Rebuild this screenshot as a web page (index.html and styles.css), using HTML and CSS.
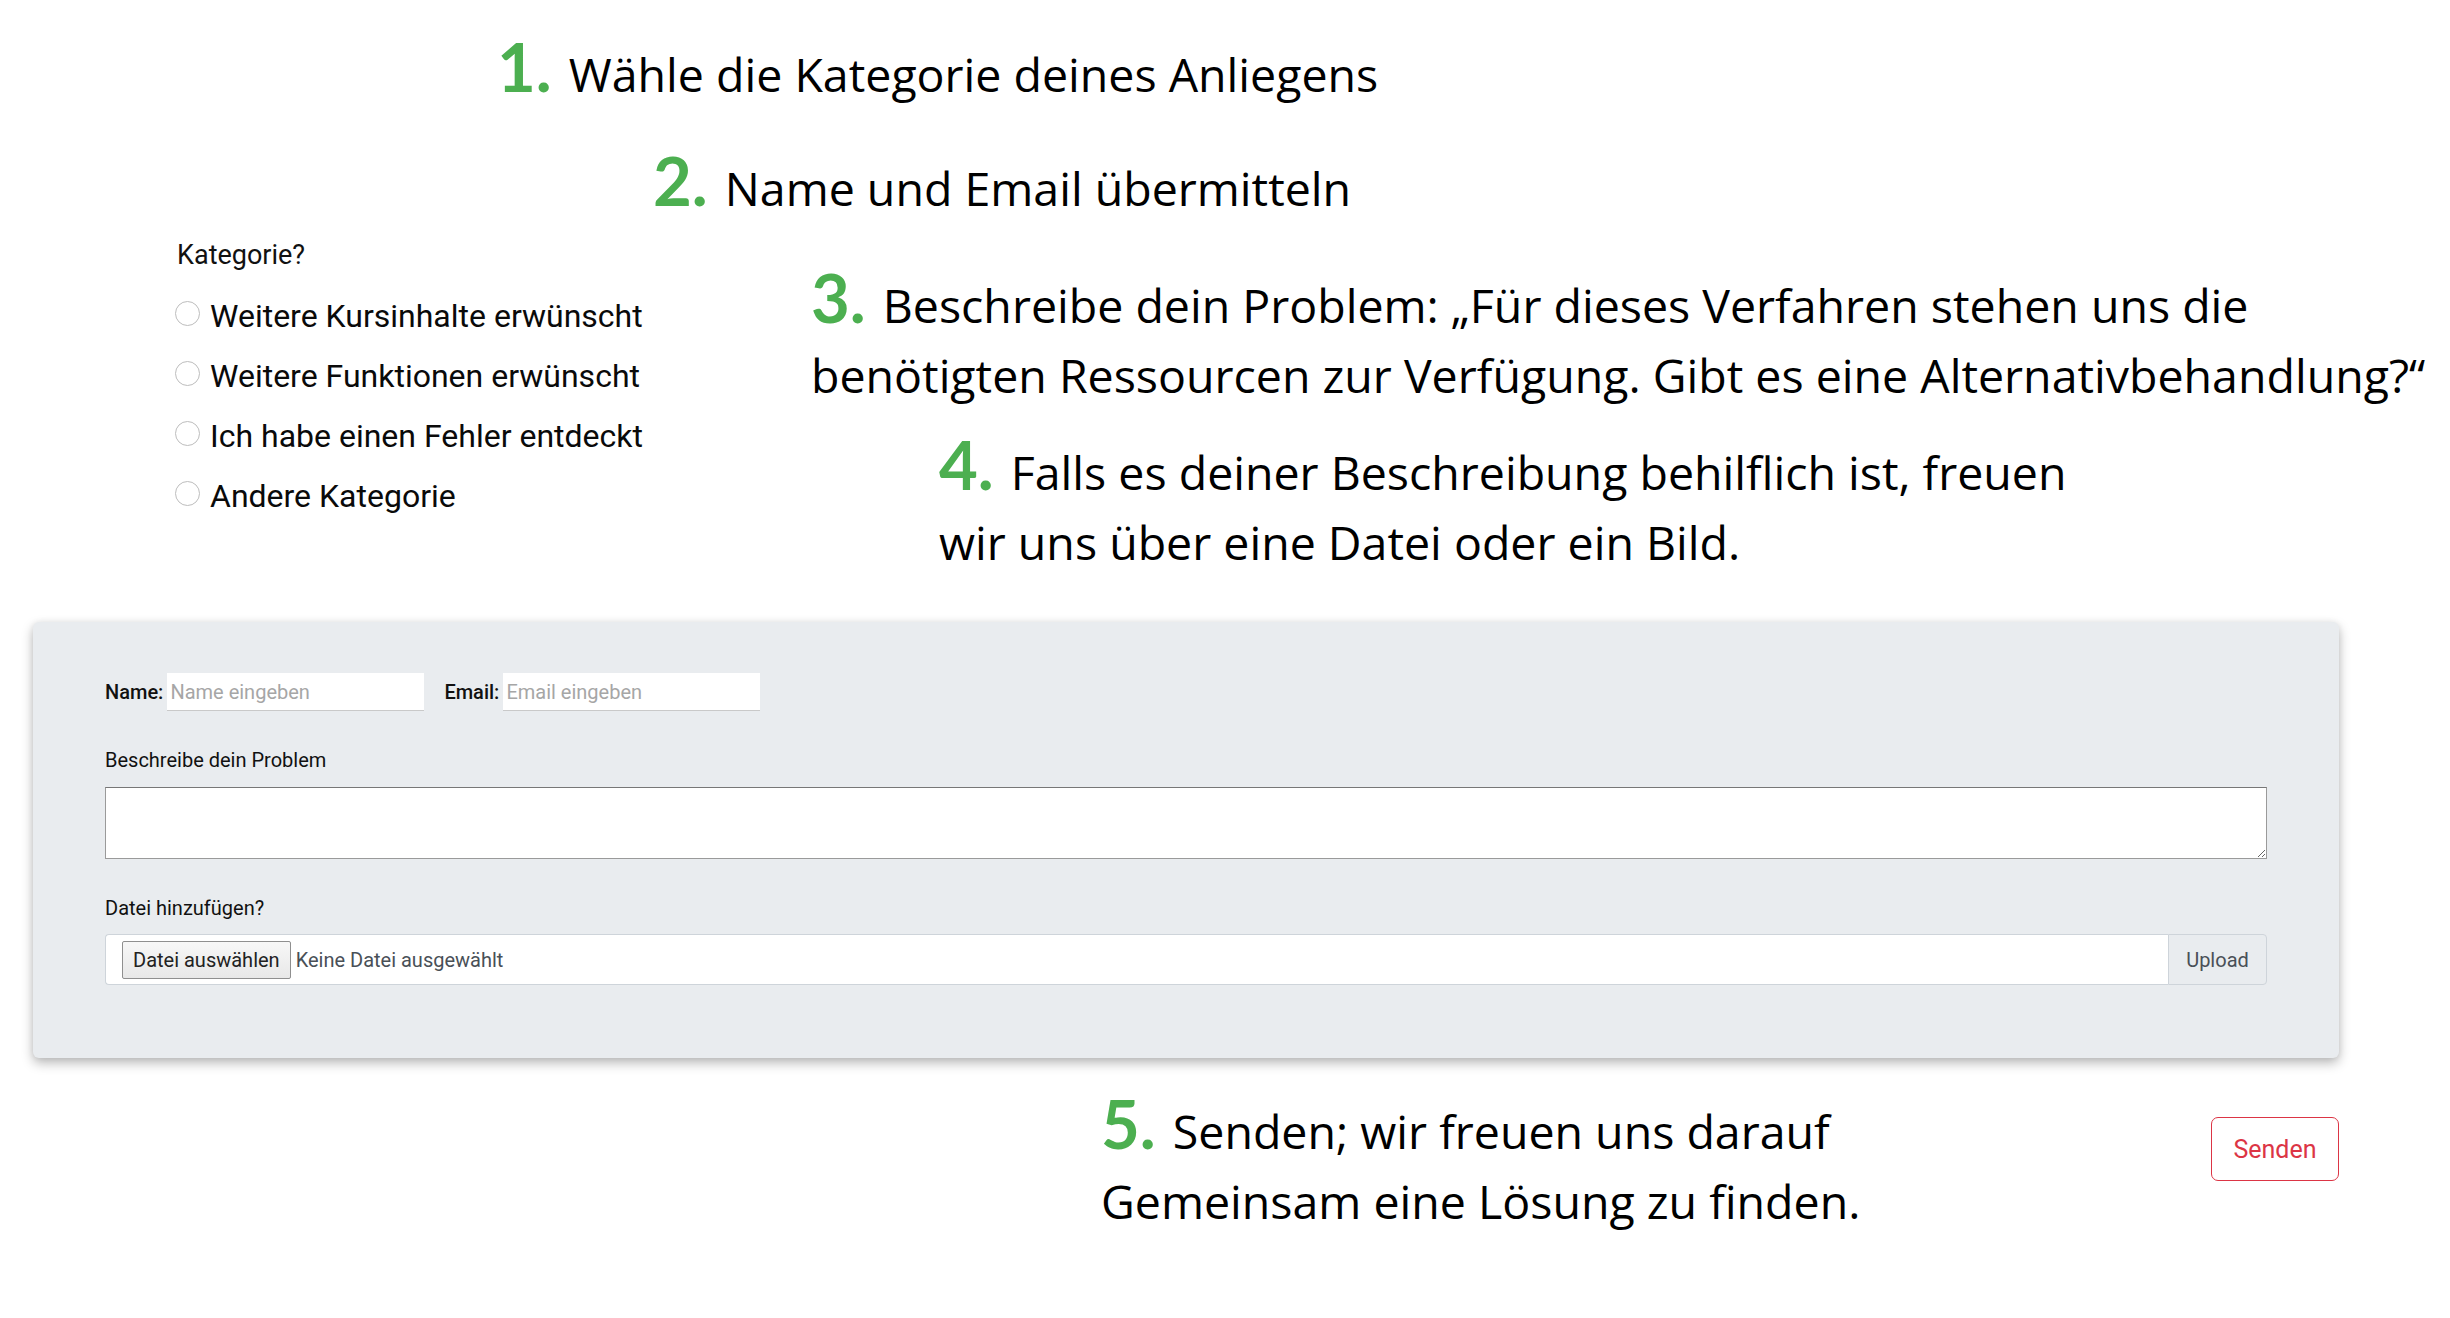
FILE: index.html
```html
<!DOCTYPE html>
<html lang="de">
<head>
<meta charset="utf-8">
<title>Kontakt</title>
<link rel="stylesheet" href="styles.css">
</head>
<body>
<main class="page">
  <p class="step step-1"><span class="num">1.</span>Wähle die Kategorie deines Anliegens</p>
  <p class="step step-2"><span class="num">2.</span>Name und Email übermitteln</p>

  <div class="middle">
    <div class="category">
      <div class="cat-title">Kategorie?</div>
      <label class="radio"><input type="radio" name="cat"><span>Weitere Kursinhalte erwünscht</span></label>
      <label class="radio"><input type="radio" name="cat"><span>Weitere Funktionen erwünscht</span></label>
      <label class="radio"><input type="radio" name="cat"><span>Ich habe einen Fehler entdeckt</span></label>
      <label class="radio"><input type="radio" name="cat"><span>Andere Kategorie</span></label>
    </div>
    <div class="notes">
      <p class="step step-3"><span class="num">3.</span>Beschreibe dein Problem: „Für dieses Verfahren stehen uns die<br>benötigten Ressourcen zur Verfügung. Gibt es eine Alternativbehandlung?“</p>
      <p class="step step-4"><span class="num">4.</span>Falls es deiner Beschreibung behilflich ist, freuen<br>wir uns über eine Datei oder ein Bild.</p>
    </div>
  </div>

  <section class="panel">
    <div class="row">
      <label class="field-label" for="name">Name:</label>
      <input class="text-input" id="name" type="text" placeholder="Name eingeben">
      <label class="field-label field-label-gap" for="email">Email:</label>
      <input class="text-input" id="email" type="text" placeholder="Email eingeben">
    </div>
    <label class="block-label" for="problem">Beschreibe dein Problem</label>
    <textarea class="problem" id="problem"></textarea>
    <div class="block-label">Datei hinzufügen?</div>
    <div class="file-group">
      <div class="file-box">
        <span class="file-btn">Datei auswählen</span>
        <span class="file-status">Keine Datei ausgewählt</span>
      </div>
      <button class="upload" type="button">Upload</button>
    </div>
  </section>

  <div class="bottom">
    <p class="step step-5"><span class="num">5.</span>Senden; wir freuen uns darauf<br>Gemeinsam eine Lösung zu finden.</p>
    <button class="send" type="button">Senden</button>
  </div>
</main>
</body>
</html>
```

FILE: styles.css
```css
* { box-sizing: border-box; }

body {
  margin: 0;
  background: #ffffff;
  font-family: Roboto, "Liberation Sans", sans-serif;
  color: #212529;
}

.page {
  width: 2450px;
  padding-top: 39px;
}

.step {
  margin: 0;
  font-family: "Open Sans", Lato, sans-serif;
  font-size: 46.5px;
  font-weight: 500;
  line-height: 70px;
  color: #000;
  white-space: nowrap;
}

.num {
  font-family: Lato, "Open Sans", sans-serif;
  font-weight: 700;
  font-size: 67px;
  line-height: 0;
  color: #4caf50;
  margin-right: 17px;
}

.step-1 { padding-left: 497px; }
.step-2 { padding-left: 653px; margin-top: 44px; }

.middle {
  display: flex;
  align-items: flex-start;
}

.category {
  flex: 0 0 811px;
  padding: 14px 0 0 175px;
}

.cat-title {
  font-size: 27px;
  line-height: 36px;
  color: #111;
  padding-left: 2px;
  margin-bottom: 13px;
}

.radio {
  display: flex;
  align-items: center;
  height: 60px;
  font-size: 32px;
  color: #0a0a0a;
}

.radio input {
  appearance: none;
  -webkit-appearance: none;
  width: 25px;
  height: 25px;
  margin: 0 10px 6px 0;
  border: 1.5px solid #bdbdbd;
  border-radius: 50%;
  background: #fff;
  flex: 0 0 auto;
}

.notes { padding-top: 47px; }
.step-4 { padding-left: 128px; margin-top: 27px; }

.panel {
  margin: 45px 0 0 33px;
  width: 2306px;
  padding: 51px 72px 73px;
  background: #e9ecef;
  border-radius: 6px;
  box-shadow: 0 5px 12px rgba(0, 0, 0, 0.28), 0 0 6px rgba(0, 0, 0, 0.06);
}

.row {
  display: flex;
  align-items: center;
  height: 38px;
}

.field-label {
  font-size: 20px;
  font-weight: 500;
  color: #111;
  margin-right: 4px;
}

.field-label-gap { margin-left: 20px; }

.text-input {
  width: 257px;
  height: 38px;
  border: 0;
  border-bottom: 1px solid #c9c9c9;
  background: #fff;
  font-family: inherit;
  font-size: 20px;
  color: #333;
  padding: 0 3px;
}

.text-input::placeholder { color: #a6a6a6; }

.block-label {
  display: block;
  font-size: 20px;
  line-height: 28px;
  color: #111;
  margin-top: 35px;
}

.problem {
  display: block;
  width: 100%;
  height: 72px;
  margin: 13px 0 0;
  border: 1px solid #9a9a9a;
  border-top-color: #777;
  background: #fff;
  font-family: inherit;
}

.file-group {
  display: flex;
  height: 51px;
  margin-top: 12px;
}

.file-box {
  flex: 1;
  display: flex;
  align-items: center;
  background: #fff;
  border: 1px solid #ced4da;
  border-right: 0;
  border-radius: 4px 0 0 4px;
  padding-left: 16px;
}

.file-btn {
  display: flex;
  align-items: center;
  height: 38px;
  padding: 0 10px;
  background: linear-gradient(#f7f7f7, #e8e8e8);
  border: 1px solid #8f8f8f;
  border-radius: 2px;
  font-size: 20px;
  color: #222;
}

.file-status {
  margin-left: 5px;
  font-size: 20px;
  color: #495057;
}

.upload {
  width: 99px;
  background: #e9ecef;
  border: 1px solid #ced4da;
  border-radius: 0 4px 4px 0;
  font-family: inherit;
  font-size: 20px;
  color: #495057;
  padding: 0;
}

.bottom {
  display: flex;
  justify-content: space-between;
  align-items: flex-start;
  margin: 38px 0 0 33px;
  width: 2306px;
  padding-left: 1068px;
}

.send {
  margin-top: 21px;
  width: 128px;
  height: 64px;
  border: 1.5px solid #dc3545;
  border-radius: 7px;
  background: #fff;
  color: #dc3545;
  font-family: inherit;
  font-size: 25px;
  padding: 0;
}
```
